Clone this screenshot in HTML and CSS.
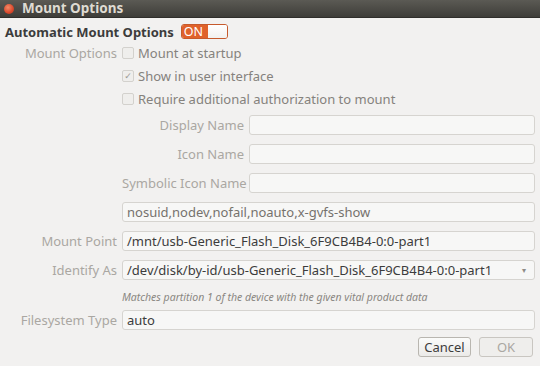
FILE: index.html
```html
<!DOCTYPE html>
<html lang="en">
<head>
    <meta charset="UTF-8">
    <title>Mount Options</title>
    <link rel="stylesheet" href="styles.css">
</head>
<body>
    <div class="titlebar">
        <span class="close"></span>
        <span class="title">Mount Options</span>
    </div>

    <div class="dialog">
        <div class="auto-row">
            <span class="auto-label">Automatic Mount Options</span>
            <span class="switch"><span class="on">ON</span><span class="off"></span></span>
        </div>

        <div class="row check-first">
            <div class="label">Mount Options</div>
            <div class="check-row"><span class="check"></span>Mount at startup</div>
        </div>
        <div class="row check-next">
            <div></div>
            <div class="check-row"><span class="check checked">&#10003;</span>Show in user interface</div>
        </div>
        <div class="row check-next">
            <div></div>
            <div class="check-row"><span class="check"></span>Require additional authorization to mount</div>
        </div>

        <div class="row names">
            <div></div>
            <div class="sub-grid">
                <div class="label">Display Name</div>
                <div class="entry"></div>
                <div class="label">Icon Name</div>
                <div class="entry"></div>
                <div class="label">Symbolic Icon Name</div>
                <div class="entry"></div>
            </div>
        </div>

        <div class="row field">
            <div></div>
            <div class="entry dim">nosuid,nodev,nofail,noauto,x-gvfs-show</div>
        </div>
        <div class="row field">
            <div class="label">Mount Point</div>
            <div class="entry">/mnt/usb-Generic_Flash_Disk_6F9CB4B4-0:0-part1</div>
        </div>
        <div class="row field">
            <div class="label">Identify As</div>
            <div class="entry combo">/dev/disk/by-id/usb-Generic_Flash_Disk_6F9CB4B4-0:0-part1<span class="arrow">&#9662;</span></div>
        </div>
        <div class="row hint-row">
            <div></div>
            <div class="hint">Matches partition 1 of the device with the given vital product data</div>
        </div>
        <div class="row fs">
            <div class="label">Filesystem Type</div>
            <div class="entry">auto</div>
        </div>

        <div class="buttons">
            <button class="btn">Cancel</button>
            <button class="btn disabled">OK</button>
        </div>
    </div>
</body>
</html>
```

FILE: styles.css
```css
body {
    margin: 0;
    background: #f2f1f0;
    font-family: 'Noto Sans', 'DejaVu Sans', sans-serif;
    font-size: 13px;
    color: #3c3c3c;
    width: 540px;
    height: 366px;
    overflow: hidden;
}
.titlebar {
    height: 18px;
    box-sizing: border-box;
    background: linear-gradient(#5b5a54, #3e3d39);
    border-bottom: 1px solid #2f2e2b;
    display: flex;
    align-items: center;
    padding-left: 4px;
}
.close {
    width: 10px;
    height: 10px;
    border-radius: 50%;
    background: radial-gradient(circle at 40% 35%, #f58a67, #d9472b 60%, #a83720);
    margin-right: 8px;
}
.title {
    color: #dfdbd2;
    font-weight: bold;
    font-size: 13.5px;
    line-height: 17px;
}
.dialog {
    padding: 0 5px 0 0;
}
.auto-row {
    display: flex;
    align-items: center;
    height: 15px;
    margin-top: 6px;
    padding-left: 5px;
}
.auto-label {
    font-weight: bold;
    font-size: 13px;
    margin-right: 7px;
}
.switch {
    display: flex;
    width: 47px;
    height: 15px;
    box-sizing: border-box;
    border: 1px solid #c65a2c;
    border-radius: 3px;
    overflow: hidden;
}
.on {
    width: 24px;
    background: #e0622b;
    color: #fff;
    font-size: 12.5px;
    line-height: 13px;
    padding-left: 2px;
}
.off {
    flex: 1;
    background: linear-gradient(#ffffff, #f2f1ef);
}
.row {
    display: grid;
    grid-template-columns: 117px 1fr;
    column-gap: 5px;
    align-items: center;
}
.label {
    text-align: right;
    color: #aaa7a2;
    white-space: nowrap;
}
.check-first {
    margin-top: 5px;
    height: 18px;
}
.check-next {
    margin-top: 5px;
    height: 18px;
}
.check-row {
    display: flex;
    align-items: center;
    color: #85827d;
}
.check {
    width: 10px;
    height: 10px;
    border: 1px solid #d3d1cd;
    border-radius: 2px;
    background: #efeeec;
    margin-right: 4px;
    font-size: 9px;
    line-height: 10px;
    text-align: center;
    color: #9a9893;
}
.names {
    margin-top: 7px;
}
.sub-grid {
    display: grid;
    grid-template-columns: 122px 1fr;
    column-gap: 5px;
    row-gap: 9px;
    align-items: center;
}
.entry {
    height: 20px;
    box-sizing: border-box;
    border: 1px solid #d6d4d0;
    border-radius: 3px;
    background: #f7f7f6;
    padding-left: 4px;
    line-height: 18px;
    white-space: nowrap;
    overflow: hidden;
    color: #3c3c3c;
}
.entry.dim {
    color: #75726d;
}
.field {
    margin-top: 9px;
}
.combo {
    position: relative;
}
.arrow {
    position: absolute;
    right: 8px;
    top: 0;
    font-size: 8px;
    color: #8e8b86;
}
.hint-row {
    margin-top: 10px;
    height: 14px;
}
.hint {
    font-style: italic;
    font-size: 10.5px;
    color: #8a8782;
}
.fs {
    margin-top: 6px;
}
.buttons {
    display: flex;
    justify-content: flex-end;
    gap: 8px;
    margin-top: 7px;
    padding-right: 2px;
}
.btn {
    width: 53px;
    height: 20px;
    box-sizing: border-box;
    border: 1px solid #b9b6b0;
    border-radius: 3px;
    background: linear-gradient(#fbfbfa, #ebeae8);
    font-family: inherit;
    font-size: 13px;
    color: #3c3c3c;
    padding: 0;
}
.btn.disabled {
    width: 54px;
    color: #aaa7a2;
    background: #efeeec;
    border-color: #c9c6c1;
}
```
